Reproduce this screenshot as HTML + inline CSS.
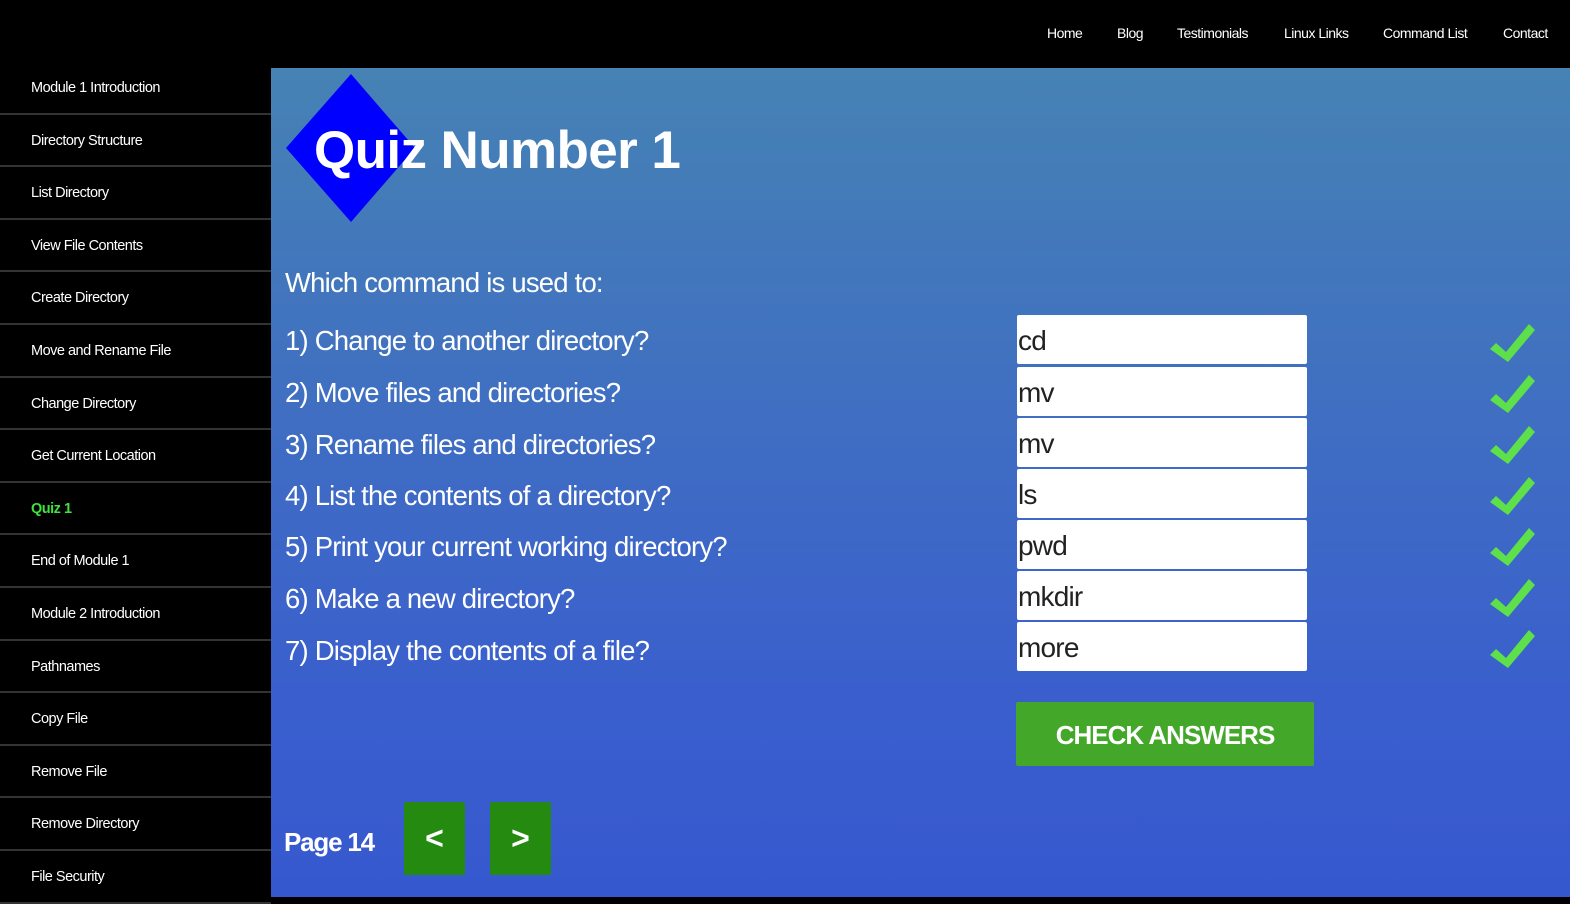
<!DOCTYPE html>
<html><head><meta charset="utf-8"><style>
*{margin:0;padding:0;box-sizing:border-box}
body{width:1570px;height:897px;overflow:hidden;background:#000;font-family:"Liberation Sans",sans-serif;position:relative;color:#fff}
.nav a{position:absolute;top:25px;font-size:14px;color:#fff;letter-spacing:-0.5px;text-decoration:none}
.side{position:absolute;left:0;top:62px;width:271px}
.side div{height:52.6px;border-bottom:2px solid #333;font-size:14.5px;letter-spacing:-0.5px;padding-left:31px;line-height:52px}
.side div.act{color:#3ee33e;font-weight:bold}
.main{position:absolute;left:271px;top:68px;width:1299px;height:829px;background:linear-gradient(#4682b4,#3a5fcd 75%,#3658cf)}
.q{position:absolute;left:14px;font-size:27.5px;letter-spacing:-0.8px;color:#fff}
.in{position:absolute;left:745px;width:290px;height:49px;background:#fff;border-radius:2px;color:#222;font-size:28px;letter-spacing:-0.8px;line-height:52px;padding-left:1px}
.ck{position:absolute;left:1216px;width:50px;height:44px}
.btn{position:absolute;background:#258a10;border-radius:2px;color:#fff;font-weight:bold;text-align:center}
</style></head><body>
<div class="nav">
<a style="left:1047px">Home</a><a style="left:1117px">Blog</a><a style="left:1177px">Testimonials</a><a style="left:1284px">Linux Links</a><a style="left:1383px">Command List</a><a style="left:1503px">Contact</a>
</div>
<div class="side">
<div>Module 1 Introduction</div><div>Directory Structure</div><div>List Directory</div><div>View File Contents</div><div>Create Directory</div><div>Move and Rename File</div><div>Change Directory</div><div>Get Current Location</div><div class="act">Quiz 1</div><div>End of Module 1</div><div>Module 2 Introduction</div><div>Pathnames</div><div>Copy File</div><div>Remove File</div><div>Remove Directory</div><div>File Security</div>
</div>
<div class="main">
<svg style="position:absolute;left:0;top:0" width="160" height="160"><polygon points="15,80 80,6 144,80 80,154" fill="#0000ff"/></svg>
<div style="position:absolute;left:43px;top:52px;font-size:53px;font-weight:bold;letter-spacing:-0.6px">Quiz Number 1</div>
<div class="q" style="top:199px">Which command is used to:</div>
<div class="q" style="top:257px">1) Change to another directory?</div>
<div class="q" style="top:309px">2) Move files and directories?</div>
<div class="q" style="top:361px">3) Rename files and directories?</div>
<div class="q" style="top:412px">4) List the contents of a directory?</div>
<div class="q" style="top:463px">5) Print your current working directory?</div>
<div class="q" style="top:515px">6) Make a new directory?</div>
<div class="q" style="top:567px">7) Display the contents of a file?</div>
<div class="in" style="top:247px;left:746px">cd</div>
<div class="in" style="top:299px;left:746px">mv</div>
<div class="in" style="top:350px;left:746px">mv</div>
<div class="in" style="top:401px;left:746px">ls</div>
<div class="in" style="top:452px;left:746px">pwd</div>
<div class="in" style="top:503px;left:746px">mkdir</div>
<div class="in" style="top:554px;left:746px">more</div>
<svg width="0" height="0" style="position:absolute"><defs><path id="c" d="M3 25 L9 19 L19 28 L42 0 L48 6 L21 38 Z" fill="#5ee04a"/></defs></svg>
<svg class="ck" style="top:256px"><use href="#c"/></svg>
<svg class="ck" style="top:307px"><use href="#c"/></svg>
<svg class="ck" style="top:358px"><use href="#c"/></svg>
<svg class="ck" style="top:409px"><use href="#c"/></svg>
<svg class="ck" style="top:460px"><use href="#c"/></svg>
<svg class="ck" style="top:511px"><use href="#c"/></svg>
<svg class="ck" style="top:562px"><use href="#c"/></svg>
<div class="btn" style="left:745px;top:634px;width:298px;height:64px;background:#43a72a;font-size:26px;line-height:66px;letter-spacing:-1px">CHECK ANSWERS</div>
<div style="position:absolute;left:13px;top:759px;font-size:26px;font-weight:bold;letter-spacing:-1.2px">Page 14</div>
<div class="btn" style="left:133px;top:734px;width:61px;height:73px;font-size:32px;line-height:73px">&lt;</div>
<div class="btn" style="left:219px;top:734px;width:61px;height:73px;font-size:32px;line-height:73px">&gt;</div>
</div>
</body></html>
